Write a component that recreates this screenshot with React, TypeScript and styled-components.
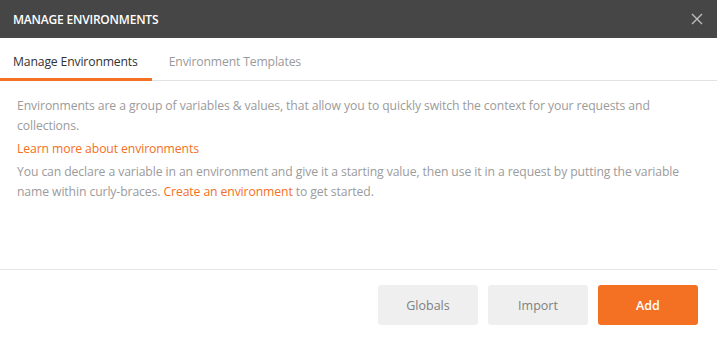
import React from 'react';
import styled, { createGlobalStyle } from 'styled-components';

const Global = createGlobalStyle`
  html, body {
    margin: 0;
    padding: 0;
    background: #fff;
  }
  body {
    font-family: "Open Sans", "Liberation Sans", sans-serif;
  }
`;

const Modal = styled.div`
  width: 717px;
  height: 343px;
  display: flex;
  flex-direction: column;
  background: #fff;
`;

const Header = styled.div`
  height: 38px;
  background: #464646;
  display: flex;
  align-items: center;
  justify-content: space-between;
  padding: 0 13px;
  box-sizing: border-box;
`;

const Title = styled.div`
  color: #fff;
  font-size: 12px;
  font-weight: 600;
  letter-spacing: -0.2px;
`;

const Close = styled.div`
  width: 12px;
  height: 12px;
  display: flex;
  margin-right: 1px;
`;

const Tabs = styled.div`
  height: 43px;
  display: flex;
  gap: 4px;
  border-bottom: 1px solid #e2e2e2;
  box-sizing: border-box;
  padding-top: 1px;
`;

const Tab = styled.div<{ $active?: boolean }>`
  padding: 6px 14px 0 13px;
  display: flex;
  align-items: center;
  font-size: 12.2px;
  color: ${p => (p.$active ? '#333' : '#9a9a9a')};
  border-bottom: 3px solid ${p => (p.$active ? '#f47023' : 'transparent')};
  margin-bottom: -1px;
  letter-spacing: -0.15px;
`;

const Body = styled.div`
  flex: 1;
  padding: 15px 17px 0 17px;
  border-bottom: 1px solid #e6e6e6;
`;

const Para = styled.p`
  margin: 0 0 3px 0;
  font-size: 12.2px;
  line-height: 20px;
  color: #9b9b9b;
  letter-spacing: -0.1px;
`;

const Link = styled.span`
  color: #f47023;
`;

const Footer = styled.div`
  height: 73px;
  display: flex;
  justify-content: flex-end;
  align-items: center;
  gap: 10px;
  padding: 0 19px 3px 0;
  box-sizing: border-box;
`;

const Button = styled.div<{ $primary?: boolean }>`
  width: 100px;
  height: 40px;
  border-radius: 3px;
  display: flex;
  align-items: center;
  justify-content: center;
  font-size: 12.5px;
  font-weight: ${p => (p.$primary ? 600 : 400)};
  background: ${p => (p.$primary ? '#f47023' : '#efefef')};
  color: ${p => (p.$primary ? '#fff' : '#808080')};
`;

export default function App() {
  return (
    <>
      <Global />
      <Modal>
        <Header>
          <Title>MANAGE ENVIRONMENTS</Title>
          <Close>
            <svg width="12" height="12" viewBox="0 0 12 12">
              <path d="M1 1 L11 11 M11 1 L1 11" stroke="#bdbdbd" strokeWidth="1.4" />
            </svg>
          </Close>
        </Header>
        <Tabs>
          <Tab $active>Manage Environments</Tab>
          <Tab>Environment Templates</Tab>
        </Tabs>
        <Body>
          <Para>
            Environments are a group of variables &amp; values, that allow you to quickly switch the context for your requests and collections.
          </Para>
          <Para>
            <Link>Learn more about environments</Link>
          </Para>
          <Para>
            You can declare a variable in an environment and give it a starting value, then use it in a request by putting the variable name within curly-braces. <Link>Create an environment</Link> to get started.
          </Para>
        </Body>
        <Footer>
          <Button>Globals</Button>
          <Button>Import</Button>
          <Button $primary>Add</Button>
        </Footer>
      </Modal>
    </>
  );
}
